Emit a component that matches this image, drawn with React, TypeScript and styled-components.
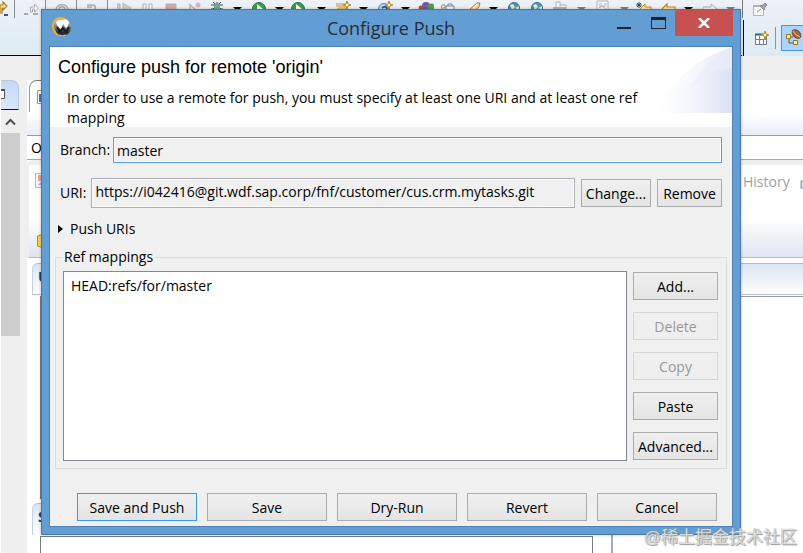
import React from "react";
import styled, { createGlobalStyle, css } from "styled-components";

const GlobalStyle = createGlobalStyle`
  *, *::before, *::after { box-sizing: border-box; }
  body { margin: 0; background: #fff; color: #000; font: 14px/20px "Open Sans", "Noto Sans", sans-serif; }
  button, input { font: inherit; color: inherit; }
`;

/* ---------- workbench behind the dialog ---------- */

const Desktop = styled.main`
  position: relative;
  display: flex;
  flex-direction: column;
  height: 100vh;
  min-height: 480px;
  overflow: hidden;
`;

const ToolArea = styled.header`
  display: flex;
  flex: none;
  height: 56px;
  background: linear-gradient(#eef1f8, #dcebf3);
`;

const MainTools = styled.div`
  display: flex;
  flex: 1;
  align-items: flex-start;
  min-width: 0;
  overflow: hidden;
  border-bottom: 1px solid #000;
`;

const ToolCell = styled.span<{ $width: number; $faded?: boolean }>`
  display: block;
  flex: none;
  width: ${(p) => p.$width}px;
  height: 16px;
  opacity: ${(p) => (p.$faded ? 0.5 : 1)};

  svg { display: block; }
`;

const ToolDivider = styled.span<{ $width: number }>`
  flex: none;
  width: ${(p) => p.$width}px;
  height: 18px;
  border-left: 1px solid #8b8b90;
`;

const Perspectives = styled.div`
  display: flex;
  flex: none;
  flex-direction: column;
  width: 61px;
`;

const PinRow = styled.div`
  height: 18px;
  padding: 3px 0 0 9px;
  border-left: 1px solid #777;
  svg { display: block; }
`;

const PerspectiveRow = styled.div`
  display: flex;
  align-items: center;
  height: 36px;
  margin: 2px 0 0 1px;
  padding-left: 10px;
  border-left: 1px solid #000;
  svg { display: block; flex: none; }
`;

const PerspectiveDivider = styled.span`
  flex: none;
  width: 1px;
  height: 22px;
  margin: 0 5px 0 6px;
  background: #8e9296;
`;

const ActivePerspective = styled.span`
  flex: none;
  display: flex;
  align-items: center;
  width: 30px;
  height: 26px;
  padding-left: 4px;
  border: 1px solid #4a97e0;
  background: #abd3fb;
`;

const ToolGap = styled.div`
  flex: none;
  height: 24px;
  background: #efefef;
`;

const Workspace = styled.div`
  display: flex;
  flex: 1;
  min-height: 0;
  background: #efefef;
`;

const Rail = styled.div`
  display: flex;
  flex: none;
  flex-direction: column;
  width: 27px;
  border-left: 1px solid #fff;
`;

const RailTab = styled.div`
  width: 18px;
  height: 30px;
  padding-top: 8px;
  border-bottom: 1px solid #111;
  border-top: 1px solid #b5c5df;
  border-right: 1px solid #b5c5df;
  border-top-right-radius: 8px;
  background: linear-gradient(#c7d8f4, #d8e7fc);
  svg { display: block; }
`;

const RailTrack = styled.div`
  display: flex;
  flex-direction: column;
  align-items: center;
  width: 19px;
  padding-top: 8px;
  svg { display: block; }
`;

const RailThumb = styled.div`
  width: 19px;
  height: 203px;
  margin-top: 7px;
  background: #cdcdcd;
`;

const Editor = styled.div`
  display: flex;
  flex: 1;
  flex-direction: column;
  min-width: 0;
  background: #fff;
`;

const EditorTabs = styled.div`
  flex: none;
  height: 56px;
  padding-left: 2px;
  border-bottom: 1px solid #9b9b9f;
  background: linear-gradient(#fff 60%, #e9edf7);
`;

const EditorTab = styled.div`
  width: 180px;
  height: 32px;
  padding: 9px 0 0 7px;
  border-top: 1px solid #777;
  border-left: 1px solid #999;
  border-top-left-radius: 8px;
  svg { display: block; }
`;

const PathRow = styled.div`
  flex: none;
  height: 24px;
  padding: 2px 0 0 4px;
  border-bottom: 1px solid #a8a8a8;
`;

const ViewTabs = styled.div`
  display: flex;
  flex: none;
  justify-content: space-between;
  height: 98px;
  padding: 6px 0 0 6px;
  border-top: 5px solid #efefef;
  border-bottom: 1px solid #a9bfd9;
  border-left: 2px solid #efefef;
  border-top-left-radius: 6px;
  background: linear-gradient(#fff 58%, #dfe6f1);
  color: #a0a0a0;
`;

const LeftIcons = styled.div`
  display: flex;
  flex-direction: column;
  justify-content: space-between;
  padding: 2px 0 8px;
  svg { display: block; }
`;

const HistoryTab = styled.span`
  display: flex;
  gap: 10px;
  height: 22px;
  width: 60px;
  padding-top: 1px;
  overflow: hidden;
  svg { display: block; flex: none; margin-top: 4px; }
`;

const SectionTitle = styled.div<{ $short?: boolean }>`
  flex: none;
  height: 32px;
  margin: ${(p) => (p.$short ? "4px 0 0 5px" : "5px 0 0 5px")};
  padding: 3px 0 0 5px;
  width: ${(p) => (p.$short ? "200px" : "auto")};
  border-top: 1px solid #aabfd9;
  border-left: 1px solid #c2d0e2;
  border-top-left-radius: 6px;
  background: linear-gradient(#dce5f2, #fff);
  box-shadow: ${(p) => (p.$short ? "none" : "inset 0 -1px #b4bfd0")};
  color: #1f3d73;
  font-weight: 700;
`;

const SectionBody = styled.div`
  flex: 1;
  min-height: 60px;
  margin: 1px 0 0 13px;
  border-top: 1px solid #9b9ba3;
  border-left: 1px solid #777b82;
`;

const LowerPanels = styled.div`
  display: flex;
  flex: none;
  height: 18px;
  padding-left: 13px;
  gap: 18px;
`;

const LowerBox = styled.div`
  flex: 0 1 553px;
  margin-top: 1px;
  border: 1px solid #7a7d86;
  border-bottom: 0;
`;

const LowerRest = styled.div`
  flex: 1;
  border-left: 2px solid #a5a9ba;
`;

/* ---------- dialog ---------- */

const Dialog = styled.section`
  position: absolute;
  inset: 9px 62px 18px 41px;
  display: flex;
  flex-direction: column;
  padding: 0 7px 7px;
  border: 1px solid #4677a8;
  background: #629ed4;
  box-shadow: 0 0 3px rgba(0, 0, 0, 0.25);
`;

const TitleBar = styled.div`
  display: grid;
  flex: none;
  grid-template-columns: 1fr auto 1fr;
  height: 36px;
`;

const TitleIcon = styled.div`
  padding: 7px 0 0 3px;
  svg { display: block; }
`;

const Title = styled.h1`
  margin: 0;
  color: #272d35;
  font-size: 18px;
  font-weight: 400;
  line-height: 37px;
`;

const WindowButtons = styled.div`
  display: flex;
  justify-content: flex-end;
  height: 26px;
`;

const WindowButton = styled.button<{ $close?: boolean }>`
  display: flex;
  align-items: center;
  justify-content: center;
  width: ${(p) => (p.$close ? 58 : 34)}px;
  padding: 0;
  border: 0;
  background: ${(p) => (p.$close ? "#c75050" : "transparent")};
`;

const Client = styled.div`
  display: flex;
  flex: 1;
  flex-direction: column;
  min-height: 0;
  border: 1px solid #4b83b9;
  background: #f0f0f0;
`;

const Banner = styled.div`
  display: flex;
  flex: none;
  justify-content: space-between;
  height: 80px;
  padding-left: 8px;
  background: #fff;
  svg { display: block; flex: none; }
`;

const BannerText = styled.div`
  flex: 1;
  min-width: 0;
`;

const Heading = styled.h2`
  margin: 10px 0 11px;
  font: 18px/20px "Liberation Sans", Arial, sans-serif;
`;

const Hint = styled.p`
  width: 600px;
  max-width: 100%;
  margin: 0;
  padding-left: 9px;
  white-space: pre-line;
`;

const Field = styled.div`
  display: flex;
  flex: none;
  align-items: center;
  padding: 0 10px;
`;

const FieldLabel = styled.label`
  flex: none;
`;

const TextBox = styled.input<{ $active?: boolean }>`
  flex: 1;
  min-width: 0;
  height: ${(p) => (p.$active ? 26 : 30)}px;
  padding: ${(p) => (p.$active ? "0 3px" : "0 3px 3px")};
  border: 1px solid ${(p) => (p.$active ? "#569de5" : "#abadb3")};
  border-radius: 0;
  outline: 0;
  background: #f0f0f0;
  box-shadow: inset 0 0 0 1px #fff;
`;

const PushButton = styled.button<{ $width: number; $primary?: boolean }>`
  flex: none;
  width: ${(p) => p.$width}px;
  height: 28px;
  padding: 2px 0 0;
  border: 1px solid ${(p) => (p.$primary ? "#3399ff" : "#acacac")};
  border-radius: 0;
  background: linear-gradient(#f0f0f0, #e4e4e4);
  white-space: nowrap;

  ${(p) =>
    p.disabled &&
    css`
      border-color: #d6d6d6;
      background: #efefef;
      color: #989898;
    `}
`;

const BranchField = styled(Field)`
  gap: 3px;
  margin: 10px 0 15px;
`;

const UriField = styled(Field)`
  gap: 6px;
  ${FieldLabel} { margin-right: -1px; }
`;

const Expander = styled.button`
  display: flex;
  flex: none;
  align-items: center;
  align-self: flex-start;
  gap: 7px;
  height: 20px;
  margin: 11px 0 8px 8px;
  padding: 0;
  border: 0;
  background: none;
`;

const Mappings = styled.fieldset`
  display: flex;
  flex: 1;
  gap: 6px;
  min-width: 0;
  min-height: 0;
  margin: 0 5px;
  padding: 4px 8px 7px 7px;
  border: 1px solid #dcdcdc;
`;

const MappingsLegend = styled.legend`
  padding: 0 2px 0 1px;
`;

const MappingList = styled.ul`
  flex: 1;
  min-width: 0;
  margin: 0;
  padding: 4px 7px;
  border: 1px solid #828790;
  background: #fff;
  list-style: none;
`;

const MappingActions = styled.div`
  display: flex;
  flex: none;
  flex-direction: column;
  gap: 12px;
  padding-top: 1px;
`;

const Footer = styled.div`
  display: flex;
  flex: none;
  justify-content: flex-end;
  gap: 10px;
  padding: 24px 15px 5px;
`;

const Watermark = styled.div`
  position: absolute;
  right: 6px;
  bottom: 4px;
  color: rgba(235, 235, 235, 0.85);
  font: 17px/22px "Liberation Sans", "Noto Sans CJK SC", sans-serif;
  text-shadow: 0 0 1px #888, 1px 1px 1px #999;
`;

/* ---------- drawings ---------- */

type Glyph =
  | "step" | "stepGray" | "ring" | "curl" | "resume" | "pause" | "stop" | "cut" | "bug"
  | "caret" | "caretGray" | "run" | "folder" | "swirl" | "blobs" | "bag" | "pencil" | "globe"
  | "stack" | "card" | "backStar" | "back" | "forward";

const star = (x: number, y: number) => (
  <path d={`M${x} ${y - 4}l1 3 3 1-3 1-1 3-1-3-3-1 3-1z`} fill="#fff3a8" stroke="#b58a20" />
);

const glyphs: Record<Glyph, React.ReactNode> = {
  step: (
    <>
      <path d="M0 13V5h3V2l4 4-4 4V8H2v5z" fill="#fce9b0" stroke="#b57d1c" strokeWidth="1.2" />
      <path d="M4 15h4" stroke="#2f5687" strokeWidth="2" />
    </>
  ),
  stepGray: (
    <>
      <path d="M0 14h4m5 0h5" stroke="#666" strokeWidth="2" />
      <path d="M6.500 12V7h4V4l4 4-4 4V9h-2v3z" fill="#fff" stroke="#666" />
    </>
  ),
  ring: <path d="M1 10C1 3 13 3 13 10M4 9c0-3 6-3 6 0" fill="none" stroke="#666" strokeWidth="1.5" />,
  curl: <path d="M1 5h6c3 0 3 3 1 5M1 7h5" fill="none" stroke="#666" strokeWidth="1.5" />,
  resume: (
    <>
      <path d="M0 4h3v6H0z" fill="#aaa" stroke="#777" />
      <path d="M6 3l8 5-2 2H6z" fill="#9ab89a" stroke="#6a8a6a" />
    </>
  ),
  pause: <path d="M1 4h3v6H1zM7 4h3v6H7z" fill="#fff" stroke="#777" />,
  stop: <path d="M1 4h10v6H1z" fill="#c65b61" stroke="#777" />,
  cut: (
    <>
      <path d="M1 4l7 6M2 10V4" stroke="#777" strokeWidth="1.5" />
      <circle cx="10" cy="5" r="2.5" fill="#b77" />
    </>
  ),
  bug: (
    <>
      <path d="M0 5h12M2 2l8 7M10 2L2 9M6 2v8M0 9h12" stroke="#294c4d" />
      <ellipse cx="6" cy="7" rx="3" ry="4" fill="#73a68d" />
    </>
  ),
  caret: <path d="M0 7h9L6 10H3z" fill="#000" />,
  caretGray: <path d="M0 7h9L6 10H3z" fill="#111" />,
  run: (
    <>
      <circle cx="7" cy="9" r="6.5" fill="#3c9b4e" stroke="#26743a" />
      <path d="M5 4l6 5H5z" fill="#fff" />
    </>
  ),
  folder: (
    <>
      <path d="M0 4h11M0 6h9" stroke="#c49434" />
      <path d="M2 8h8v3H2z" fill="#ffe6a4" stroke="#c49434" />
      {star(11, 5)}
    </>
  ),
  swirl: (
    <>
      <circle cx="6" cy="9" r="5.5" fill="#b5dafa" stroke="#4d7faf" />
      <path d="M4 8c2-2 5-2 5 2" fill="none" stroke="#2c6098" strokeWidth="2" />
      {star(11, 5)}
    </>
  ),
  blobs: (
    <>
      <circle cx="3" cy="8" r="2.5" fill="#b34f45" />
      <circle cx="8" cy="6" r="4" fill="#7557a5" />
      <circle cx="13" cy="7" r="3.5" fill="#4d9e55" />
    </>
  ),
  bag: (
    <>
      <path d="M0 8h4V5H1z" fill="#fff" stroke="#888" />
      <path d="M5 6h8v5H5zM7 6V4h4v2" fill="#f5f7ff" stroke="#728099" />
    </>
  ),
  pencil: (
    <>
      <path d="M0 9l7-6 3 0-1 4-4 3z" fill="#ffd99b" stroke="#b57836" />
      <path d="M3 8l4-4" stroke="#fff" />
    </>
  ),
  globe: (
    <>
      <circle cx="6" cy="8" r="5.500" fill="#4b91c4" stroke="#316d99" />
      <path d="M2 5l3-1 2 3-3 3zM7 8l4-2v4z" fill="#d7efb5" />
    </>
  ),
  stack: (
    <>
      <path d="M3 8V2h4v6M7 5h6v4" fill="#fff" stroke="#777" />
      <path d="M0 8h13" stroke="#777" strokeWidth="2" />
    </>
  ),
  card: (
    <>
      <path d="M1 1h11v10H1z" fill="#fff" stroke="#777" />
      <path d="M3 4h3M8 4h3M3 6h7M3 8l3-2 4 3" fill="none" stroke="#777" />
    </>
  ),
  backStar: (
    <>
      <path d="M4 9l5-5v3h6v3" fill="#ffe9ad" stroke="#bd861e" />
      <path d="M0 5h6M1 3l4 4M5 3L1 7M3 2v6" stroke="#28465f" />
    </>
  ),
  back: <path d="M1 9l5-5v3h8v3" fill="#ffe9ad" stroke="#bd861e" strokeWidth="1.2" />,
  forward: <path d="M0 10V7h8V4l6 5" fill="#fff" stroke="#666" />,
};

const tools: Array<[Glyph | "divider", number, boolean?]> = [
  ["step", 14], ["divider", 10], ["stepGray", 21, true], ["divider", 10], ["ring", 21, true],
  ["divider", 10], ["curl", 21, true], ["divider", 10], ["resume", 25, true], ["pause", 23, true],
  ["stop", 23, true], ["cut", 23, true], ["bug", 22], ["caret", 19], ["run", 23], ["caret", 16],
  ["run", 26], ["caret", 19], ["folder", 23], ["caret", 19], ["swirl", 23], ["caret", 17],
  ["blobs", 23], ["bag", 29], ["pencil", 19], ["caret", 19], ["globe", 23], ["globe", 22],
  ["stack", 24, true], ["caretGray", 19, true], ["card", 24, true], ["caretGray", 16, true],
  ["backStar", 25], ["back", 23], ["caret", 19], ["forward", 23, true], ["caretGray", 15, true],
];

const Tool = ({ kind, width, faded }: { kind: Glyph; width: number; faded?: boolean }) => (
  <ToolCell $width={width} $faded={faded}>
    <svg width="16" height="16" viewBox="0 0 16 16" aria-hidden="true">{glyphs[kind]}</svg>
  </ToolCell>
);

const PinIcon = () => (
  <svg width="16" height="14" viewBox="0 0 16 14" aria-hidden="true">
    <path d="M1.500 2.500h10v10h-10z" fill="#f8f8f8" stroke="#b4b4b4" />
    <path d="M1 3h10" stroke="#b0b0b0" strokeWidth="2" />
    <path d="M5 9l4-3" stroke="#89938f" />
    <path d="M8 3l3-1 2-2 2 2-2 2-1 3z" fill="#a0aaa6" stroke="#828d89" />
  </svg>
);

const OpenPerspectiveIcon = () => (
  <svg width="15" height="15" viewBox="0 0 15 15" aria-hidden="true">
    <path d="M1.500 3.500h11v10h-11z" fill="#fff" stroke="#6b7a8c" />
    <path d="M1 3.500h8" stroke="#2465a5" strokeWidth="2" />
    <path d="M5.500 5v8M1 8.500h12M9.500 9v5" stroke="#8b7d5b" />
    {star(11, 4)}
  </svg>
);

const JavaPerspectiveIcon = () => (
  <svg width="16" height="18" viewBox="0 0 16 18" aria-hidden="true">
    <path d="M3 8v6h6M3 8h4" fill="none" stroke="#555" />
    <path d="M.5 5.500h4v4h-4zM7.500 11.500h4v4h-4z" fill="#fff0a8" stroke="#a17613" />
    <ellipse cx="10.500" cy="5" rx="3.500" ry="5" fill="#a8643b" stroke="#7a4428" transform="rotate(-45 10.500 5)" />
    <path d="M7 2q2 4 7 6" fill="none" stroke="#ecc09e" />
  </svg>
);

const SapIcon = () => (
  <svg width="20" height="20" viewBox="0 0 20 20" aria-hidden="true">
    <defs>
      <linearGradient id="orb" x1="0" y1="0" x2="0" y2="1">
        <stop offset="0" stopColor="#c9c9c9" />
        <stop offset="0.5" stopColor="#777" />
        <stop offset="0.8" stopColor="#222" />
        <stop offset="1" stopColor="#555" />
      </linearGradient>
    </defs>
    <path d="M9 0C3 0 0 4 0 9s3 9 6 10l4-4 5-12q-2-3-6-3z" fill="#f7ae23" />
    <path d="M2 6Q4 2 9 3q6-2 9 3 3 6-2 11-5 4-9 1-6-5-5-12z" fill="url(#orb)" />
    <path d="M4 5q3-3 7-2 4-2 6 2-1 5-3 6l-3-4-2 5q-4-2-5-7z" fill="#fff" />
    <path d="M5 10l3 5 3-4 3 4 3-5" fill="none" stroke="#1b1b1b" strokeWidth="2" />
    <path d="M7 18q4 2 7 0" fill="none" stroke="#ccc" />
  </svg>
);

const BannerCurve = () => (
  <svg width="76" height="67" viewBox="0 0 76 67" aria-hidden="true">
    <defs>
      <linearGradient id="curveA">
        <stop offset="0" stopColor="#fff" />
        <stop offset="0.5" stopColor="#f6f8fd" />
        <stop offset="1" stopColor="#e6eaf8" />
      </linearGradient>
      <linearGradient id="curveB">
        <stop offset="0" stopColor="#fff" stopOpacity="0" />
        <stop offset="1" stopColor="#dbe2f5" />
      </linearGradient>
    </defs>
    <path d="M0 66Q24 16 76 0V66z" fill="url(#curveA)" />
    <path d="M34 41Q48 14 76 0V21Q52 25 34 41z" fill="#e8ecf8" opacity="0.5" />
    <path d="M4 66Q33 25 76 21V66z" fill="url(#curveB)" />
  </svg>
);

const FileIcon = () => (
  <svg width="14" height="14" viewBox="0 0 14 14" aria-hidden="true">
    <path d="M.5.500h13v13H.5z" fill="#fff" stroke="#a9956b" />
    <path d="M2 4h5v8H2z" fill="#4979b5" />
  </svg>
);

export default function App() {
  return (
    <>
      <GlobalStyle />
      <Desktop>
        <ToolArea>
          <MainTools>
            {tools.map(([kind, width, faded], i) =>
              kind === "divider" ? (
                <ToolDivider key={i} $width={width} />
              ) : (
                <Tool key={i} kind={kind} width={width} faded={faded} />
              )
            )}
          </MainTools>
          <Perspectives>
            <PinRow><PinIcon /></PinRow>
            <PerspectiveRow>
              <OpenPerspectiveIcon />
              <PerspectiveDivider />
              <ActivePerspective><JavaPerspectiveIcon /></ActivePerspective>
            </PerspectiveRow>
          </Perspectives>
        </ToolArea>
        <ToolGap />
        <Workspace>
          <Rail>
            <RailTab>
              <svg width="4" height="10" viewBox="0 0 4 10" aria-hidden="true">
                <path d="M0 0h3.500v9.500H0" fill="#fff" stroke="#555" />
                <path d="M0 1h4" stroke="#555" strokeWidth="2" />
              </svg>
            </RailTab>
            <RailTrack>
              <svg width="11" height="8" viewBox="0 0 11 8" aria-hidden="true">
                <path d="M1 6.500l4.500-4.500L10 6.500" fill="none" stroke="#505050" strokeWidth="2" />
              </svg>
              <RailThumb />
            </RailTrack>
          </Rail>
          <Editor>
            <EditorTabs>
              <EditorTab><FileIcon /></EditorTab>
            </EditorTabs>
            <PathRow>O</PathRow>
            <ViewTabs>
              <LeftIcons>
                <svg width="12" height="15" viewBox="0 0 12 15" aria-hidden="true">
                  <path d="M.5.500h11v14H.5z" fill="#f7f7fb" stroke="#b4b8b6" />
                  <path d="M3 2h3v3h3v3H3z" fill="#eea0a0" />
                  <path d="M3 12l4-4 3 5z" fill="#9ab5de" />
                </svg>
                <svg width="14" height="16" viewBox="0 0 14 16" aria-hidden="true">
                  <path d="M2.500 3Q7 0 13 3v10q-5 3-10.500 0z" fill="#f6d64a" stroke="#b88c13" />
                </svg>
              </LeftIcons>
              <HistoryTab>
                History
                <svg width="8" height="14" viewBox="0 0 8 14" aria-hidden="true">
                  <path d="M1 5h6v7H1zM4 5l2-3" fill="#dce6f5" stroke="#888" />
                </svg>
              </HistoryTab>
            </ViewTabs>
            <SectionTitle>U</SectionTitle>
            <SectionBody />
            <SectionTitle $short>S</SectionTitle>
            <LowerPanels>
              <LowerBox />
              <LowerRest />
            </LowerPanels>
          </Editor>
        </Workspace>

        <Dialog role="dialog" aria-labelledby="dialog-title">
          <TitleBar>
            <TitleIcon><SapIcon /></TitleIcon>
            <Title id="dialog-title">Configure Push</Title>
            <WindowButtons>
              <WindowButton type="button" aria-label="Minimize">
                <svg width="14" height="12" viewBox="0 0 14 12" aria-hidden="true">
                  <path d="M0 10h14v2H0z" fill="#222" />
                </svg>
              </WindowButton>
              <WindowButton type="button" aria-label="Maximize">
                <svg width="15" height="12" viewBox="0 0 15 12" aria-hidden="true">
                  <path d="M0 0h15v12H0zM1 3v8h13V3z" fill="#222" fillRule="evenodd" />
                </svg>
              </WindowButton>
              <WindowButton type="button" aria-label="Close" $close>
                <svg width="12" height="10" viewBox="0 0 12 10" aria-hidden="true">
                  <path d="M1 0l10 10M11 0L1 10" stroke="#fff" strokeWidth="2.5" />
                </svg>
              </WindowButton>
            </WindowButtons>
          </TitleBar>

          <Client>
            <Banner>
              <BannerText>
                <Heading>Configure push for remote 'origin'</Heading>
                <Hint>
                  {"In order to use a remote for push, you must specify at least one URI and at least one ref\nmapping"}
                </Hint>
              </BannerText>
              <BannerCurve />
            </Banner>

            <BranchField>
              <FieldLabel htmlFor="branch">Branch:</FieldLabel>
              <TextBox id="branch" defaultValue="master" readOnly $active />
            </BranchField>
            <UriField>
              <FieldLabel htmlFor="uri">URI:</FieldLabel>
              <TextBox id="uri" defaultValue="https://i042416@git.wdf.sap.corp/fnf/customer/cus.crm.mytasks.git" readOnly />
              <PushButton type="button" $width={70}>Change...</PushButton>
              <PushButton type="button" $width={65}>Remove</PushButton>
            </UriField>
            <Expander type="button" aria-expanded="false">
              <svg width="5" height="8" viewBox="0 0 5 8" aria-hidden="true">
                <path d="M0 0l5 4-5 4z" />
              </svg>
              Push URIs
            </Expander>

            <Mappings>
              <MappingsLegend>Ref mappings</MappingsLegend>
              <MappingList>
                <li>HEAD:refs/for/master</li>
              </MappingList>
              <MappingActions>
                <PushButton type="button" $width={85}>Add...</PushButton>
                <PushButton type="button" $width={85} disabled>Delete</PushButton>
                <PushButton type="button" $width={85} disabled>Copy</PushButton>
                <PushButton type="button" $width={85}>Paste</PushButton>
                <PushButton type="button" $width={85}>Advanced...</PushButton>
              </MappingActions>
            </Mappings>

            <Footer>
              <PushButton type="submit" $width={120} $primary>Save and Push</PushButton>
              <PushButton type="button" $width={120}>Save</PushButton>
              <PushButton type="button" $width={120}>Dry-Run</PushButton>
              <PushButton type="button" $width={120}>Revert</PushButton>
              <PushButton type="button" $width={120}>Cancel</PushButton>
            </Footer>
          </Client>
        </Dialog>
        <Watermark>@稀土掘金技术社区</Watermark>
      </Desktop>
    </>
  );
}
